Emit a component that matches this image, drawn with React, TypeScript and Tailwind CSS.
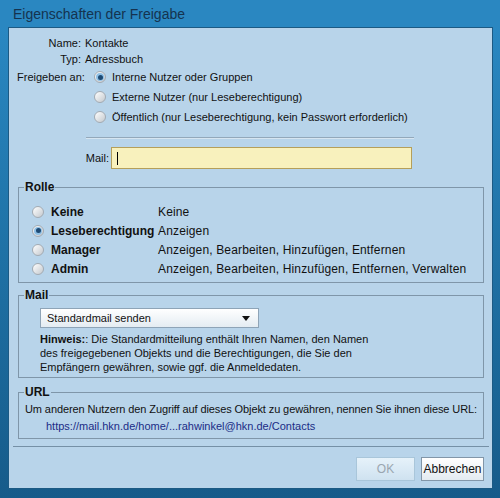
import React from "react";

function Radio({ checked }: { checked?: boolean }) {
  return (
    <span className="w-[12px] h-[12px] shrink-0 rounded-full border border-[#a3abb3] bg-gradient-to-br from-[#ffffff] to-[#c4c9ce] flex items-center justify-center">
      {checked && (
        <span className="w-[8px] h-[8px] rounded-full bg-[#8fc0e6] flex items-center justify-center">
          <span className="w-[5px] h-[5px] rounded-full bg-[#1d4a74]" />
        </span>
      )}
    </span>
  );
}

function RoleRow({ name, desc, checked }: { name: string; desc: string; checked?: boolean }) {
  return (
    <div className="h-[19px] flex items-center whitespace-nowrap">
      <Radio checked={checked} />
      <span className="ml-[7px] w-[107px] font-bold text-[12px]">{name}</span>
      <span className="text-[12px] tracking-[0.15px]">{desc}</span>
    </div>
  );
}

export default function App() {
  return (
    <div className="w-[500px] h-[498px] bg-gradient-to-b from-[#2b8ac5] via-[#1f72a6] to-[#165b8a] flex flex-col font-['Liberation_Sans',Arial,sans-serif] text-[11px] text-[#111111]">
      <div className="h-[27px] shrink-0 pl-[13px] pt-[6px] leading-[16px] bg-[#2a87c1]">
        <span className="text-[14px] text-[#15334f]">Eigenschaften der Freigabe</span>
      </div>
      <div className="ml-[8px] mr-[7px] mb-[9px] flex-1 bg-[#b8d4ea] border border-[#1c5a84] flex flex-col">
        {/* top info */}
        <div className="pt-[7px] flex flex-col leading-[16px] whitespace-nowrap">
          <div className="flex h-[16px] items-center">
            <span className="w-[72px] text-right">Name:</span>
            <span className="ml-[4px]">Kontakte</span>
          </div>
          <div className="flex h-[16px] items-center">
            <span className="w-[72px] text-right">Typ:</span>
            <span className="ml-[4px]">Adressbuch</span>
          </div>
          <div className="flex">
            <span className="w-[72px] shrink-0 pl-[8px] h-[20px] flex items-center">Freigeben an:</span>
            <div className="ml-[13px] flex flex-col">
              <label className="h-[20px] flex items-center">
                <Radio checked />
                <span className="ml-[6px]">Interne Nutzer oder Gruppen</span>
              </label>
              <label className="h-[20px] flex items-center">
                <Radio />
                <span className="ml-[6px]">Externe Nutzer (nur Leseberechtigung)</span>
              </label>
              <label className="h-[20px] flex items-center">
                <Radio />
                <span className="ml-[6px]">Öffentlich (nur Leseberechtigung, kein Passwort erforderlich)</span>
              </label>
            </div>
          </div>
        </div>
        <div className="mt-[10px] ml-[77px] w-[328px] border-t border-[#93a8ba] border-b border-b-[#d6e5f1]" />
        <div className="mt-[8px] flex items-center">
          <span className="w-[100px] text-right">Mail:</span>
          <div className="ml-[2px] w-[301px] h-[22px] bg-[#f8f1bd] border border-[#b59f5a] flex items-center pl-[5px]">
            <span className="w-[1px] h-[13px] bg-black" />
          </div>
        </div>

        {/* Rolle */}
        <fieldset className="mt-[11px] ml-[9px] w-[466px] border border-[#7f96a9]">
          <legend className="ml-[5px] px-[1px] font-bold text-[12px] leading-[14px]">Rolle</legend>
          <div className="pl-[13px] pt-[8px] pb-[4px]">
            <RoleRow name="Keine" desc="Keine" />
            <RoleRow name="Leseberechtigung" desc="Anzeigen" checked />
            <RoleRow name="Manager" desc="Anzeigen, Bearbeiten, Hinzufügen, Entfernen" />
            <RoleRow name="Admin" desc="Anzeigen, Bearbeiten, Hinzufügen, Entfernen, Verwalten" />
          </div>
        </fieldset>

        {/* Mail */}
        <fieldset className="mt-[5px] ml-[9px] w-[466px] border border-[#7f96a9]">
          <legend className="ml-[5px] px-[1px] font-bold text-[12px] leading-[14px]">Mail</legend>
          <div className="pl-[21px] pt-[6px] pb-[3px]">
            <div className="w-[219px] h-[20px] border border-[#8ea4b7] bg-gradient-to-b from-[#ffffff] to-[#e4ecf2] flex items-center pl-[6px] pr-[8px] justify-between">
              <span>Standardmail senden</span>
              <svg width="8" height="5" viewBox="0 0 8 5">
                <path d="M0 0 L8 0 L4 5 Z" fill="#111" />
              </svg>
            </div>
            <div className="mt-[4px] leading-[14px] whitespace-nowrap">
              <div>
                <b>Hinweis:</b>: Die Standardmitteilung enthält Ihren Namen, den Namen
              </div>
              <div>des freigegebenen Objekts und die Berechtigungen, die Sie den</div>
              <div>Empfängern gewähren, sowie ggf. die Anmeldedaten.</div>
            </div>
          </div>
        </fieldset>

        {/* URL */}
        <fieldset className="mt-[7px] ml-[9px] w-[466px] border border-[#7f96a9]">
          <legend className="ml-[5px] px-[1px] font-bold text-[12px] leading-[14px]">URL</legend>
          <div className="pl-[6px] pt-[2px] pb-[3px] whitespace-nowrap">
            <div className="h-[17px] flex items-center tracking-[-0.1px]">
              Um anderen Nutzern den Zugriff auf dieses Objekt zu gewähren, nennen Sie ihnen diese URL:
            </div>
            <div className="h-[17px] flex items-center pl-[21px] text-[#1b2c86]">
              https://mail.hkn.de/home/...rahwinkel@hkn.de/Contacts
            </div>
          </div>
        </fieldset>

        <div className="mt-[7px] ml-[4px] w-[476px] border-t border-[#7590a6]" />

        <div className="mt-[10px] flex justify-end pr-[8px] gap-[6px]">
          <button className="w-[59px] h-[24px] border border-[#a9c6da] bg-gradient-to-b from-[#e6f2fa] to-[#cfe2f0] text-[#9aa6b0] text-[12px]">
            OK
          </button>
          <button className="w-[63px] h-[24px] border border-[#8296a8] bg-gradient-to-b from-[#ffffff] to-[#e3ebf1] text-[#111] text-[12px]">
            Abbrechen
          </button>
        </div>
      </div>
    </div>
  );
}
